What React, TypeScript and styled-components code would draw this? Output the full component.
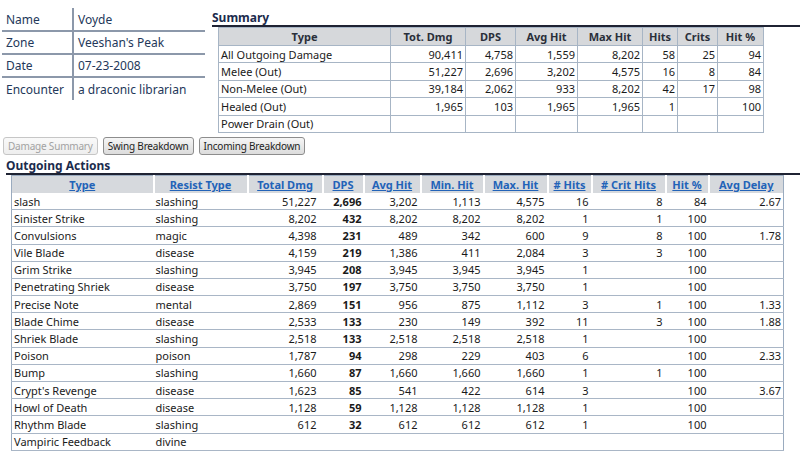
import styled, { createGlobalStyle } from 'styled-components';

const GlobalStyle = createGlobalStyle`
  body {
    margin: 0;
    background: #ffffff;
    font-family: 'Noto Sans', 'Open Sans', sans-serif;
    color: #1a1a1a;
  }
`;

const INFO = [
  ['Name', 'Voyde'],
  ['Zone', "Veeshan's Peak"],
  ['Date', '07-23-2008'],
  ['Encounter', 'a draconic librarian'],
];

const SUMMARY_HEAD = ['Type', 'Tot. Dmg', 'DPS', 'Avg Hit', 'Max Hit', 'Hits', 'Crits', 'Hit %'];
const SUMMARY_WIDTHS = [172, 75, 50, 62, 65, 35, 40, 46];
const SUMMARY = [
  ['All Outgoing Damage', '90,411', '4,758', '1,559', '8,202', '58', '25', '94'],
  ['Melee (Out)', '51,227', '2,696', '3,202', '4,575', '16', '8', '84'],
  ['Non-Melee (Out)', '39,184', '2,062', '933', '8,202', '42', '17', '98'],
  ['Healed (Out)', '1,965', '103', '1,965', '1,965', '1', '', '100'],
  ['Power Drain (Out)', '', '', '', '', '', '', ''],
];

const ACTION_HEAD = [
  'Type', 'Resist Type', 'Total Dmg', 'DPS', 'Avg Hit', 'Min. Hit',
  'Max. Hit', '# Hits', '# Crit Hits', 'Hit %', 'Avg Delay',
];
const ACTION_WIDTHS = [142, 94, 75, 41, 57, 63, 64, 44, 74, 43, 75];
const ACTION_PAD = [2, 2, 6, 2, 3, 3, 3, 3, 3, 2, 2];
const ACTIONS = [
  ['slash', 'slashing', '51,227', '2,696', '3,202', '1,113', '4,575', '16', '8', '84', '2.67'],
  ['Sinister Strike', 'slashing', '8,202', '432', '8,202', '8,202', '8,202', '1', '1', '100', ''],
  ['Convulsions', 'magic', '4,398', '231', '489', '342', '600', '9', '8', '100', '1.78'],
  ['Vile Blade', 'disease', '4,159', '219', '1,386', '411', '2,084', '3', '3', '100', ''],
  ['Grim Strike', 'slashing', '3,945', '208', '3,945', '3,945', '3,945', '1', '', '100', ''],
  ['Penetrating Shriek', 'disease', '3,750', '197', '3,750', '3,750', '3,750', '1', '', '100', ''],
  ['Precise Note', 'mental', '2,869', '151', '956', '875', '1,112', '3', '1', '100', '1.33'],
  ['Blade Chime', 'disease', '2,533', '133', '230', '149', '392', '11', '3', '100', '1.88'],
  ['Shriek Blade', 'slashing', '2,518', '133', '2,518', '2,518', '2,518', '1', '', '100', ''],
  ['Poison', 'poison', '1,787', '94', '298', '229', '403', '6', '', '100', '2.33'],
  ['Bump', 'slashing', '1,660', '87', '1,660', '1,660', '1,660', '1', '1', '100', ''],
  ["Crypt's Revenge", 'disease', '1,623', '85', '541', '422', '614', '3', '', '100', '3.67'],
  ['Howl of Death', 'disease', '1,128', '59', '1,128', '1,128', '1,128', '1', '', '100', ''],
  ['Rhythm Blade', 'slashing', '612', '32', '612', '612', '612', '1', '', '100', ''],
  ['Vampiric Feedback', 'divine', '', '', '', '', '', '', '', '', ''],
];

export default function App() {
  return (
    <Page>
      <GlobalStyle />
      <TopBlock>
        <InfoTable>
          <tbody>
            {INFO.map(([label, value], i) => (
              <InfoRow key={label} $last={i === INFO.length - 1}>
                <InfoLabel>{label}</InfoLabel>
                <InfoValue>{value}</InfoValue>
              </InfoRow>
            ))}
          </tbody>
        </InfoTable>
        <SummaryBlock>
          <SectionTitle>Summary</SectionTitle>
          <SummaryTable>
            <colgroup>
              {SUMMARY_WIDTHS.map((w, i) => (
                <col key={i} style={{ width: w }} />
              ))}
            </colgroup>
            <thead>
              <tr>
                {SUMMARY_HEAD.map(h => (
                  <SummaryHead key={h}>{h}</SummaryHead>
                ))}
              </tr>
            </thead>
            <tbody>
              {SUMMARY.map(row => (
                <tr key={row[0]}>
                  {row.map((cell, i) => (
                    <SummaryCell key={i} $left={i === 0}>
                      {cell}
                    </SummaryCell>
                  ))}
                </tr>
              ))}
            </tbody>
          </SummaryTable>
        </SummaryBlock>
      </TopBlock>

      <ButtonRow>
        <TabButton disabled>Damage Summary</TabButton>
        <TabButton>Swing Breakdown</TabButton>
        <TabButton>Incoming Breakdown</TabButton>
      </ButtonRow>

      <ActionsBlock>
        <SectionTitle>Outgoing Actions</SectionTitle>
        <ActionTable>
          <colgroup>
            {ACTION_WIDTHS.map((w, i) => (
              <col key={i} style={{ width: w }} />
            ))}
          </colgroup>
          <thead>
            <tr>
              {ACTION_HEAD.map(h => (
                <ActionHead key={h}>
                  <HeadLink href="#">{h}</HeadLink>
                </ActionHead>
              ))}
            </tr>
          </thead>
          <tbody>
            {ACTIONS.map(row => (
              <tr key={row[0]}>
                {row.map((cell, i) => (
                  <ActionCell
                    key={i}
                    $left={i < 2}
                    $bold={i === 3}
                    $pad={ACTION_PAD[i]}
                  >
                    {cell}
                  </ActionCell>
                ))}
              </tr>
            ))}
          </tbody>
        </ActionTable>
      </ActionsBlock>
    </Page>
  );
}

const Page = styled.div`
  width: 800px;
  height: 457px;
  overflow: hidden;
  background: #ffffff;
`;

const TopBlock = styled.div`
  display: flex;
  align-items: flex-start;
`;

const InfoTable = styled.table`
  width: 203px;
  margin: 8px 0 0 2px;
  border-collapse: collapse;
  font-size: 12px;
  color: #24385a;
`;

const InfoRow = styled.tr<{ $last: boolean }>`
  height: 23px;
  border-bottom: ${({ $last }) => ($last ? 'none' : '2px solid #8c98aa')};
`;

const InfoLabel = styled.td`
  width: 66px;
  padding: 0 0 0 4px;
  border-right: 2px solid #8c98aa;
`;

const InfoValue = styled.td`
  padding: 0 0 0 4px;
`;

const SummaryBlock = styled.div`
  flex: 1;
  margin: 11px 0 0 7px;
`;

const SectionTitle = styled.div`
  font-size: 12px;
  font-weight: 700;
  color: #1b2b4d;
  line-height: 14px;
  border-bottom: 2px solid #1f2333;
`;

const SummaryTable = styled.table`
  width: 546px;
  margin-left: 6px;
  border-collapse: collapse;
  table-layout: fixed;
  font-size: 11px;
  border: 1px solid #8fa3b9;
`;

const SummaryHead = styled.th`
  height: 17px;
  padding: 0;
  background: #d6d8db;
  color: #2a2f3a;
  font-weight: 700;
  text-align: center;
  border: 1px solid #a7b5c5;
`;

const SummaryCell = styled.td<{ $left: boolean }>`
  height: 16.4px;
  padding: 0 2px;
  text-align: ${({ $left }) => ($left ? 'left' : 'right')};
  border: 1px solid #a7b5c5;
  white-space: nowrap;
`;

const ButtonRow = styled.div`
  display: flex;
  gap: 5px;
  margin: 4px 0 0 3px;
`;

const TabButton = styled.button`
  height: 18px;
  padding: 0 4px;
  font-family: 'Noto Sans', 'Open Sans', sans-serif;
  font-size: 10px;
  letter-spacing: -0.2px;
  color: #1e1e1e;
  background: linear-gradient(#f6f6f6, #dcdcdc);
  border: 1px solid #8d8d8d;
  border-radius: 3px;
  &:disabled {
    color: #a2a2a2;
    background: linear-gradient(#f9f9f9, #eeeeee);
    border-color: #c6c6c6;
  }
`;

const ActionsBlock = styled.div`
  margin: 4px 0 0 6px;
`;

const ActionTable = styled.table`
  width: 772px;
  margin: 0 0 0 5px;
  border-collapse: collapse;
  table-layout: fixed;
  font-size: 11px;
  border: 1px solid #9aabbf;
`;

const ActionHead = styled.th`
  height: 17px;
  padding: 0;
  background: #d6d9dd;
  text-align: center;
  border-left: 2px solid #ffffff;
  &:first-child {
    border-left: none;
  }
`;

const HeadLink = styled.a`
  color: #2263b8;
  font-weight: 700;
  text-decoration: underline;
`;

const ActionCell = styled.td<{ $left: boolean; $bold: boolean; $pad: number }>`
  height: 16.2px;
  padding: ${({ $left, $pad }) => ($left ? '0 0 0 2px' : `0 ${$pad}px 0 0`)};
  text-align: ${({ $left }) => ($left ? 'left' : 'right')};
  font-weight: ${({ $bold }) => ($bold ? 700 : 400)};
  border-bottom: 1px solid #a9b6c6;
  white-space: nowrap;
`;
